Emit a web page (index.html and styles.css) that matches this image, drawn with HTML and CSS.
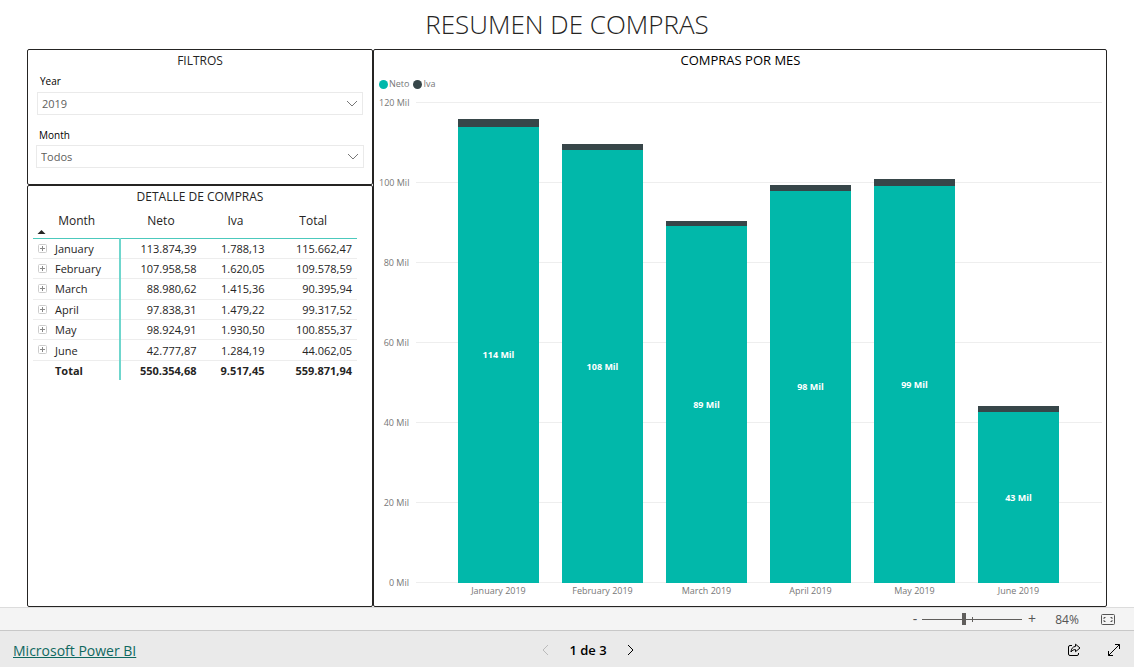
FILE: index.html
```
<!DOCTYPE html>
<html lang="es">
<head>
<meta charset="utf-8">
<title>Resumen de compras</title>
<link rel="stylesheet" href="styles.css">
</head>
<body>
<main class="report">
  <h1 class="report-title">RESUMEN DE COMPRAS</h1>
  <div class="panels">
    <section class="panel filters">
      <h2 class="panel-title">FILTROS</h2>
      <div class="field field-year">
        <label for="year">Year</label>
        <div class="select-box">
          <select id="year"><option>2019</option></select>
          <svg class="chevron" viewBox="0 0 12 8"><path d="M1 1l5 5 5-5"/></svg>
        </div>
      </div>
      <div class="field field-month">
        <label for="month">Month</label>
        <div class="select-box">
          <select id="month"><option>Todos</option></select>
          <svg class="chevron" viewBox="0 0 12 8"><path d="M1 1l5 5 5-5"/></svg>
        </div>
      </div>
    </section>

    <section class="panel detail">
      <h2 class="panel-title">DETALLE DE COMPRAS</h2>
      <table class="matrix">
        <colgroup><col class="col-month"><col class="col-neto"><col class="col-iva"><col class="col-total"></colgroup>
        <thead>
          <tr><th scope="col">Month<svg class="sort" viewBox="0 0 10 5"><path d="M0 5L5 0l5 5z"/></svg></th><th scope="col">Neto</th><th scope="col">Iva</th><th scope="col">Total</th></tr>
        </thead>
        <tbody>
          <tr><th scope="row"><button class="expand" aria-label="Expandir January"><svg viewBox="0 0 9 9"><rect x=".5" y=".5" width="8" height="8" rx="1"/><path d="M2 4.500h5M4.500 2v5"/></svg></button>January</th><td>113.874,39</td><td>1.788,13</td><td>115.662,47</td></tr>
          <tr><th scope="row"><button class="expand" aria-label="Expandir February"><svg viewBox="0 0 9 9"><rect x=".5" y=".5" width="8" height="8" rx="1"/><path d="M2 4.500h5M4.500 2v5"/></svg></button>February</th><td>107.958,58</td><td>1.620,05</td><td>109.578,59</td></tr>
          <tr><th scope="row"><button class="expand" aria-label="Expandir March"><svg viewBox="0 0 9 9"><rect x=".5" y=".5" width="8" height="8" rx="1"/><path d="M2 4.500h5M4.500 2v5"/></svg></button>March</th><td>88.980,62</td><td>1.415,36</td><td>90.395,94</td></tr>
          <tr><th scope="row"><button class="expand" aria-label="Expandir April"><svg viewBox="0 0 9 9"><rect x=".5" y=".5" width="8" height="8" rx="1"/><path d="M2 4.500h5M4.500 2v5"/></svg></button>April</th><td>97.838,31</td><td>1.479,22</td><td>99.317,52</td></tr>
          <tr><th scope="row"><button class="expand" aria-label="Expandir May"><svg viewBox="0 0 9 9"><rect x=".5" y=".5" width="8" height="8" rx="1"/><path d="M2 4.500h5M4.500 2v5"/></svg></button>May</th><td>98.924,91</td><td>1.930,50</td><td>100.855,37</td></tr>
          <tr><th scope="row"><button class="expand" aria-label="Expandir June"><svg viewBox="0 0 9 9"><rect x=".5" y=".5" width="8" height="8" rx="1"/><path d="M2 4.500h5M4.500 2v5"/></svg></button>June</th><td>42.777,87</td><td>1.284,19</td><td>44.062,05</td></tr>
          <tr class="total"><th scope="row">Total</th><td>550.354,68</td><td>9.517,45</td><td>559.871,94</td></tr>
        </tbody>
      </table>
    </section>

    <section class="panel chart">
      <h2 class="panel-title">COMPRAS POR MES</h2>
      <div class="legend">
        <span class="key"><i class="dot dot-neto"></i>Neto</span>
        <span class="key"><i class="dot dot-iva"></i>Iva</span>
      </div>
      <div class="plot">
        <div class="ticks">
          <div class="tick"><span>120 Mil</span></div>
          <div class="tick"><span>100 Mil</span></div>
          <div class="tick"><span>80 Mil</span></div>
          <div class="tick"><span>60 Mil</span></div>
          <div class="tick"><span>40 Mil</span></div>
          <div class="tick"><span>20 Mil</span></div>
          <div class="tick"><span>0 Mil</span></div>
        </div>
        <div class="bars">
          <div class="bar"><div class="iva" style="height:1.49%"></div><div class="neto" style="height:94.90%">114 Mil</div></div>
          <div class="bar"><div class="iva" style="height:1.35%"></div><div class="neto" style="height:89.97%">108 Mil</div></div>
          <div class="bar"><div class="iva" style="height:1.18%"></div><div class="neto" style="height:74.15%">89 Mil</div></div>
          <div class="bar"><div class="iva" style="height:1.23%"></div><div class="neto" style="height:81.53%">98 Mil</div></div>
          <div class="bar"><div class="iva" style="height:1.61%"></div><div class="neto" style="height:82.44%">99 Mil</div></div>
          <div class="bar"><div class="iva" style="height:1.07%"></div><div class="neto" style="height:35.65%">43 Mil</div></div>
        </div>
      </div>
      <div class="months">
        <span>January 2019</span><span>February 2019</span><span>March 2019</span><span>April 2019</span><span>May 2019</span><span>June 2019</span>
      </div>
    </section>
  </div>
</main>

<div class="zoombar">
  <button class="zoom-step" aria-label="Alejar">-</button>
  <input class="zoom-range" type="range" min="0" max="200" value="84" aria-label="Zoom">
  <button class="zoom-step" aria-label="Acercar">+</button>
  <span class="zoom-value">84%</span>
  <button class="icon-button" aria-label="Ajustar a la página">
    <svg class="fit" viewBox="0 0 14 11"><rect x=".5" y=".5" width="13" height="10" rx="1"/><path d="M4.500 3.500h-1.500v1.500M9.500 3.500h1.500v1.500M4.500 7.500h-1.500v-1.500M9.500 7.500h1.500v-1.500"/></svg>
  </button>
</div>

<footer class="footer">
  <a class="brand" href="#">Microsoft Power BI</a>
  <nav class="pager">
    <button class="icon-button" aria-label="Página anterior" disabled><svg class="arrow" viewBox="0 0 7 12"><path d="M6 1L1 6l5 5"/></svg></button>
    <span>1 de 3</span>
    <button class="icon-button" aria-label="Página siguiente"><svg class="arrow" viewBox="0 0 7 12"><path d="M1 1l5 5-5 5"/></svg></button>
  </nav>
  <div class="actions">
    <button class="icon-button" aria-label="Compartir"><svg class="action" viewBox="0 0 14 14"><path d="M5 2.500H3a1.500 1.500 0 0 0-1.500 1.500v7A1.500 1.500 0 0 0 3 12.500h7a1.500 1.500 0 0 0 1.500-1.500v-1"/><path d="M8.500 1.200L13 5 8.500 8.700V6.600C6.500 6.500 5.200 7.300 4 9c.1-3.200 1.700-5.300 4.500-5.600z"/></svg></button>
    <button class="icon-button" aria-label="Pantalla completa"><svg class="action" viewBox="0 0 14 14"><path d="M1.500 12.500l11-11M8 1.500h4.500V6M1.500 8v4.500H6"/></svg></button>
  </div>
</footer>
</body>
</html>
```
FILE: styles.css
```
* { box-sizing: border-box; }

body {
  margin: 0;
  min-height: 100vh;
  display: flex;
  flex-direction: column;
  background: #fff;
  color: #252423;
  font-family: "Open Sans", "Noto Sans", sans-serif;
  font-size: 11px;
}

button {
  padding: 0;
  border: 0;
  background: none;
  color: inherit;
  font: inherit;
}

svg {
  display: block;
  fill: none;
  stroke: currentColor;
}

.report {
  flex: 1;
  display: flex;
  flex-direction: column;
  padding: 0 27px;
}

.report-title {
  margin: 0;
  font-size: 26px;
  font-weight: 350;
  line-height: 49px;
  text-align: center;
}

.panels {
  flex: 1;
  display: grid;
  grid-template-columns: 346fr 734fr;
  grid-template-rows: auto 1fr;
}

.panel {
  border: 1px solid #252423;
  border-radius: 2px;
}

.panel-title {
  margin: 0;
  font-size: 12px;
  font-weight: 400;
  line-height: 21px;
  text-align: center;
}

.filters {
  padding-bottom: 16px;
}

.field {
  display: flex;
  flex-direction: column;
  color: #000;
  font-size: 10px;
}

.field label {
  padding-left: 3px;
  line-height: 21px;
}

.field-year {
  margin: 0 9px;
}

.field-month {
  margin: 10px 8px 0;
}

.select-box {
  display: grid;
  align-items: center;
}

.select-box > * {
  grid-area: 1 / 1;
}

.select-box select {
  width: 100%;
  height: 23px;
  padding: 0 4px;
  border: 1px solid #eaeaea;
  border-radius: 0;
  appearance: none;
  background: #fff;
  color: #605e5c;
  font: 11px "Open Sans", sans-serif;
}

.field-month label {
  line-height: 20px;
}

.chevron {
  width: 12px;
  height: 8px;
  margin-right: 5px;
  justify-self: end;
  color: #777;
  pointer-events: none;
}

.detail {
  grid-column: 1;
}

.matrix {
  width: calc(100% - 20px);
  height: 173px;
  margin-left: 5px;
  border-collapse: collapse;
  table-layout: fixed;
}

.col-month { width: 27%; }
.col-neto { width: 25%; }
.col-iva { width: 21%; }
.col-total { width: 27%; }

.matrix th {
  padding: 0;
  font-weight: 400;
}

.matrix thead th {
  height: 31px;
  padding-bottom: 4px;
  border-bottom: 1px solid #4cc9bd;
  font-size: 12px;
  position: relative;
}

.sort {
  position: absolute;
  left: 4px;
  bottom: 4px;
  width: 9px;
  height: 4px;
  fill: #252423;
  stroke: none;
}

.matrix tbody th {
  padding-left: 22px;
  border-right: 2px solid #6fd6cd;
  text-align: left;
  position: relative;
}

.matrix tbody td {
  padding: 0 5px 0 0;
  text-align: right;
}

.matrix tbody tr {
  border-bottom: 1px solid #ededed;
}

.matrix .total {
  border-bottom: 0;
}

.matrix .total > * {
  font-weight: 700;
}

.expand {
  position: absolute;
  left: 5px;
  top: 5px;
}

.expand svg {
  width: 9px;
  height: 9px;
}

.expand rect { stroke: #ccc; }
.expand path { stroke: #888; }

.chart {
  grid-area: 1 / 2 / 3 / 3;
  display: flex;
  flex-direction: column;
  padding: 0 4px 7px 5px;
  color: #777;
  font-size: 9px;
}

.chart .panel-title {
  color: #000;
  font-size: 13px;
}

.legend {
  display: flex;
  gap: 4px;
  padding-top: 7px;
  line-height: 12px;
  margin-bottom: 12px;
}

.key {
  display: flex;
  align-items: center;
  gap: 1px;
}

.dot {
  width: 9px;
  height: 9px;
  border-radius: 50%;
}

.dot-neto { background: #01b8aa; }
.dot-iva { background: #374649; }

.plot {
  flex: 1;
  display: grid;
}

.ticks,
.bars {
  grid-area: 1 / 1;
}

.ticks {
  display: flex;
  flex-direction: column;
  justify-content: space-between;
}

.tick {
  display: flex;
  gap: 7px;
  height: 1px;
  line-height: 1px;
}

.tick span {
  width: 30px;
  text-align: right;
  white-space: nowrap;
}

.tick::after {
  content: "";
  flex: 1;
  background: #eeeeee;
}

.bars,
.months {
  display: grid;
  grid-template-columns: repeat(6, 1fr);
  column-gap: 23px;
  padding: 0 43px 0 79px;
}

.bar {
  display: flex;
  flex-direction: column;
  justify-content: flex-end;
}

.iva {
  background: #374649;
}

.neto {
  display: flex;
  align-items: center;
  justify-content: center;
  background: #01b8aa;
  color: #fff;
  font-weight: 700;
}

.months {
  line-height: 16px;
  text-align: center;
  white-space: nowrap;
}

.zoombar {
  display: flex;
  align-items: center;
  justify-content: flex-end;
  height: 23px;
  padding-right: 19px;
  border-top: 1px solid #dcdcdc;
  background: #f4f4f4;
  color: #555;
  font-size: 12px;
}

.zoom-step {
  width: 14px;
  font-size: 14px;
  line-height: 20px;
}

.zoom-range {
  width: 100px;
  height: 12px;
  margin: 0 3px 0 0;
  appearance: none;
  background:
    linear-gradient(#605e5c, #605e5c) 50% 50% / 1px 5px no-repeat,
    linear-gradient(#605e5c, #605e5c) 50% 50% / 100% 1px no-repeat;
}

.zoom-range::-webkit-slider-thumb {
  appearance: none;
  width: 4px;
  height: 12px;
  background: #605e5c;
}

.zoom-value {
  width: 56px;
  text-align: center;
}

.fit {
  width: 14px;
  height: 11px;
  margin-left: 6px;
}

.footer {
  display: grid;
  grid-template-columns: 1fr auto 1fr;
  align-items: center;
  height: 37px;
  padding: 2px 13px 0;
  border-top: 1px solid #c8c8c8;
  background: #eaeaea;
  color: #000;
}

.brand {
  color: #0f6860;
  font-size: 14px;
  justify-self: start;
}

.pager {
  display: flex;
  align-items: center;
  gap: 20px;
  margin-left: 42px;
  font-size: 13px;
  font-weight: 600;
}

.pager :disabled {
  color: #bbb;
}

.arrow {
  width: 7px;
  height: 12px;
}

.actions {
  display: flex;
  justify-content: flex-end;
  gap: 26px;
}

.action {
  width: 14px;
  height: 14px;
}
```
